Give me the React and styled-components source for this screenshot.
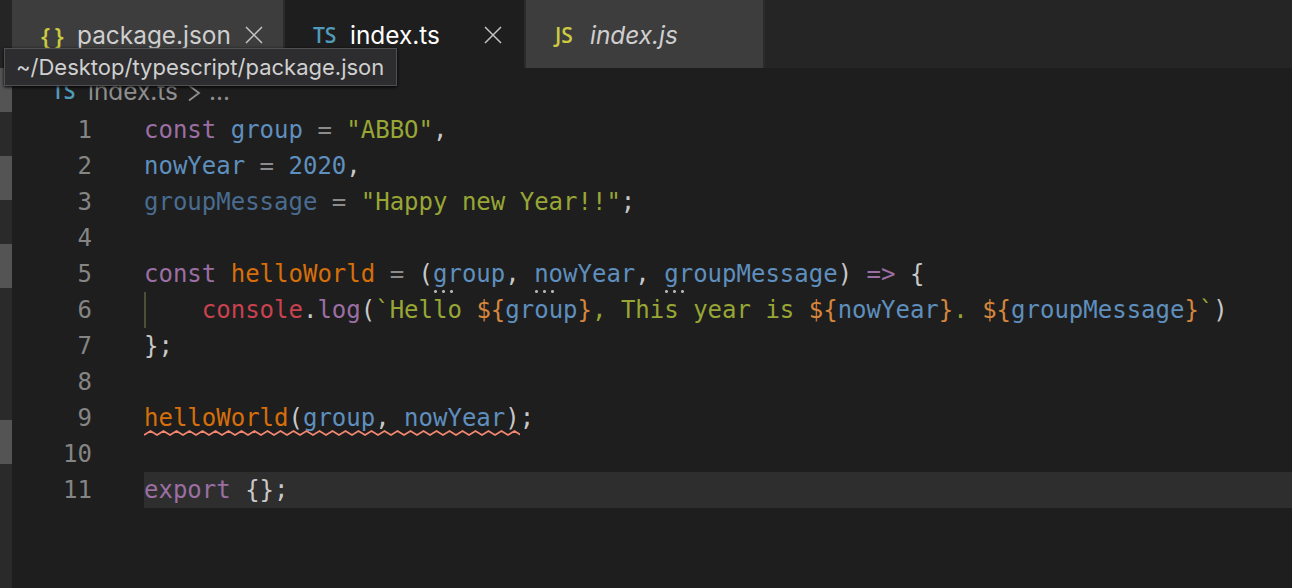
import styled, { createGlobalStyle } from "styled-components";

const GlobalStyle = createGlobalStyle`
  html, body {
    margin: 0;
    height: 100%;
    background: #1e1e1e;
    overflow: hidden;
  }
`;

const CODE_LINES = [
  [["#9b6fa3", "const "], ["#5e8fbe", "group"], ["#8c8c8c", " = "], ["#98a635", '"ABBO"'], ["#c8c8c8", ","]],
  [["#5e8fbe", "nowYear"], ["#8c8c8c", " = "], ["#5e8fbe", "2020"], ["#c8c8c8", ","]],
  [["#4a6c90", "groupMessage"], ["#8c8c8c", " = "], ["#98a635", '"Happy new Year!!"'], ["#c8c8c8", ";"]],
  [],
  [
    ["#9b6fa3", "const "],
    ["#d66f0a", "helloWorld"],
    ["#8c8c8c", " = "],
    ["#c8c8c8", "("],
    ["#5e8fbe", "group", true],
    ["#c8c8c8", ", "],
    ["#5e8fbe", "nowYear", true],
    ["#c8c8c8", ", "],
    ["#5e8fbe", "groupMessage", true],
    ["#c8c8c8", ") "],
    ["#9b6fa3", "=>"],
    ["#c8c8c8", " {"],
  ],
  [
    ["#c8c8c8", "    "],
    ["#c9424f", "console"],
    ["#c8c8c8", "."],
    ["#9b6fa3", "log"],
    ["#c8c8c8", "("],
    ["#98a635", "`Hello "],
    ["#d5863c", "${"],
    ["#5e8fbe", "group"],
    ["#d5863c", "}"],
    ["#98a635", ", This year is "],
    ["#d5863c", "${"],
    ["#5e8fbe", "nowYear"],
    ["#d5863c", "}"],
    ["#98a635", ". "],
    ["#d5863c", "${"],
    ["#5e8fbe", "groupMessage"],
    ["#d5863c", "}"],
    ["#98a635", "`"],
    ["#c8c8c8", ")"],
  ],
  [["#c8c8c8", "};"]],
  [],
  [
    ["#d66f0a", "helloWorld"],
    ["#c8c8c8", "("],
    ["#5e8fbe", "group"],
    ["#c8c8c8", ", "],
    ["#5e8fbe", "nowYear"],
    ["#c8c8c8", ")"],
    ["#c8c8c8", ";"],
  ],
  [],
  [["#9b6fa3", "export "], ["#c8c8c8", "{};"]],
];

const Window = styled.div`
  width: 1292px;
  height: 588px;
  position: relative;
  display: flex;
  flex-direction: column;
  background: #1e1e1e;
  overflow: hidden;
`;

const TabBar = styled.div`
  height: 68px;
  flex: none;
  display: flex;
  padding-left: 12px;
  background: #252526;
`;

const Tab = styled.div`
  width: ${(p) => p.$width}px;
  flex: none;
  box-sizing: border-box;
  display: flex;
  align-items: center;
  padding: 2px 0 0 ${(p) => p.$pad}px;
  background: ${(p) => (p.$active ? "#1e1e1e" : "#3d3d3d")};
  border-right: 2px solid #2b2b2b;
  color: ${(p) => (p.$active ? "#ffffff" : "#cfcfcf")};
  font-family: Inter, "Liberation Sans", sans-serif;
  font-size: 24.4px;
  font-style: ${(p) => (p.$italic ? "italic" : "normal")};
`;

const FileIcon = styled.span`
  width: ${(p) => p.$width}px;
  flex: none;
  box-sizing: border-box;
  padding-left: ${(p) => p.$inset || 0}px;
  letter-spacing: ${(p) => p.$tight || 0}px;
  color: ${(p) => p.$color};
  font-family: "Open Sans", sans-serif;
  font-size: ${(p) => p.$size}px;
  font-style: normal;
  font-weight: 600;
`;

const CloseIcon = styled.svg`
  width: 18px;
  height: 18px;
  margin-left: ${(p) => p.$gap}px;
  flex: none;
  stroke: #c4c4c4;
  stroke-width: 1.5;
`;

const Tooltip = styled.div`
  position: absolute;
  left: 4px;
  top: 48px;
  height: 38px;
  box-sizing: border-box;
  display: flex;
  align-items: center;
  padding: 0 12px 0 11px;
  background: #2d2d2f;
  border: 1px solid #505050;
  box-shadow: 0 1px 3px #000;
  color: #d0d0d0;
  font-family: Inter, "Liberation Sans", sans-serif;
  font-size: 22px;
  white-space: nowrap;
`;

const Body = styled.div`
  flex: 1;
  display: flex;
`;

const SideStrip = styled.div`
  width: 12px;
  flex: none;
  display: flex;
  flex-direction: column;
  background: #2a2a2a;
`;

const StripMark = styled.div`
  height: 44px;
  margin-top: ${(p) => p.$top}px;
  background: #545454;
`;

const Main = styled.div`
  flex: 1;
  min-width: 0;
`;

const Breadcrumb = styled.div`
  height: 44px;
  box-sizing: border-box;
  display: flex;
  align-items: center;
  padding: 2px 0 0 40px;
  color: #8f8f8f;
  font-family: Inter, "Liberation Sans", sans-serif;
  font-size: 24.4px;
`;

const CrumbChevron = styled.svg`
  width: 14px;
  height: 18px;
  margin: 3px 8px 0 9px;
  stroke: #8f8f8f;
  stroke-width: 1.8;
  fill: none;
`;

const Line = styled.div`
  height: 36px;
  display: flex;
  font-family: "DejaVu Sans Mono", monospace;
  font-size: 24px;
  line-height: 36px;
  white-space: pre;
`;

const LineNumber = styled.div`
  width: 80px;
  margin-right: 52px;
  flex: none;
  text-align: right;
  color: #858585;
`;

const LineCode = styled.div`
  flex: 1;
  position: relative;
  background: ${(p) => (p.$current ? "#2e2e2e" : "transparent")};
`;

const IndentGuide = styled.div`
  position: absolute;
  left: 0;
  top: 0;
  bottom: 0;
  width: 2px;
  background: #4f4f38;
`;

const Squiggle = styled.svg`
  position: absolute;
  left: 0;
  top: 30px;
  width: 376px;
  height: 6px;
  fill: none;
  stroke: #f48771;
  stroke-width: 1.7;
`;

const Token = styled.span`
  position: relative;
  color: ${(p) => p.$color};

  ${(p) =>
    p.$hint &&
    `
    &::after {
      content: "";
      position: absolute;
      left: 1px;
      top: 30px;
      width: 22px;
      height: 3px;
      background: radial-gradient(circle at 1.5px 1.5px, #b4b4b4 1.3px, transparent 1.6px) 0 0 / 8px 3px repeat-x;
    }
  `}
`;

function Close({ gap }) {
  return (
    <CloseIcon $gap={gap} viewBox="0 0 18 18">
      <path d="M1 1 L17 17 M17 1 L1 17" />
    </CloseIcon>
  );
}

function App() {
  return (
    <Window>
      <GlobalStyle />
      <TabBar>
        <Tab $width={273} $pad={27}>
          <FileIcon $width={38} $size={24} $inset={2} $tight={-1} $color="#cbcb41">{"{ }"}</FileIcon>
          package.json
          <Close gap={14} />
        </Tab>
        <Tab $width={241} $pad={28} $active>
          <FileIcon $width={37} $size={21} $color="#519aba">TS</FileIcon>
          index.ts
          <Close gap={44} />
        </Tab>
        <Tab $width={239} $pad={29} $italic>
          <FileIcon $width={35} $size={21} $color="#cbcb41">JS</FileIcon>
          index.js
        </Tab>
      </TabBar>
      <Body>
        <SideStrip>
          <StripMark $top={0} />
          <StripMark $top={44} />
          <StripMark $top={44} />
          <StripMark $top={132} />
        </SideStrip>
        <Main>
          <Breadcrumb>
            <FileIcon $width={36} $size={21} $color="#519aba">TS</FileIcon>
            index.ts
            <CrumbChevron viewBox="0 0 14 18">
              <path d="M2 1.5 L12 9 L2 16.5" />
            </CrumbChevron>
            ...
          </Breadcrumb>
          {CODE_LINES.map((tokens, i) => (
            <Line key={i}>
              <LineNumber>{i + 1}</LineNumber>
              <LineCode $current={i === 10}>
                {i === 5 && <IndentGuide />}
                {tokens.map(([color, text, hint], j) => (
                  <Token key={j} $color={color} $hint={hint}>
                    {text}
                  </Token>
                ))}
                {i === 8 && (
                  <Squiggle viewBox="0 0 376 6">
                    <path d={"M0 5" + " l6.5 -4 l6.5 4".repeat(29)} />
                  </Squiggle>
                )}
              </LineCode>
            </Line>
          ))}
        </Main>
      </Body>
      <Tooltip>~/Desktop/typescript/package.json</Tooltip>
    </Window>
  );
}

export default App;
